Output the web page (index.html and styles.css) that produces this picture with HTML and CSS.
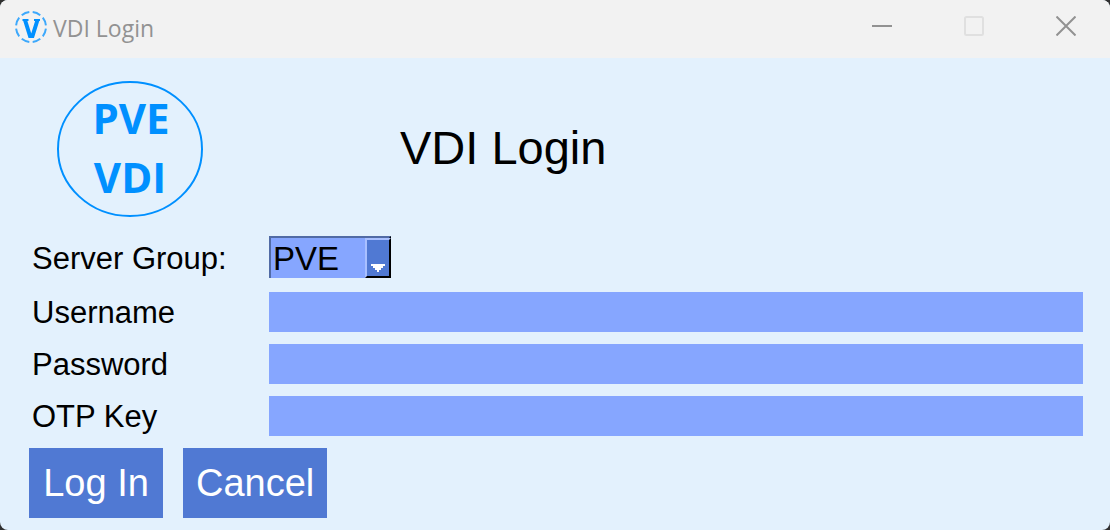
FILE: index.html
```html
<!DOCTYPE html>
<html lang="en">
<head>
<meta charset="utf-8">
<title>VDI Login</title>
<link rel="stylesheet" href="styles.css">
</head>
<body>
<div class="window">
  <header class="titlebar">
    <svg class="app-icon" viewBox="0 0 32 32" aria-hidden="true">
      <circle class="icon-ring" cx="16" cy="16" r="15" pathLength="80"/>
      <path class="icon-v" d="M10 9 15 25h2.500L22.500 9"/>
      <path class="icon-serif" d="M7.500 9h6M19 9h6"/>
    </svg>
    <span class="titlebar-text">VDI Login</span>
    <div class="controls">
      <button class="control" type="button" aria-label="Minimize">
        <svg viewBox="0 0 20 20"><path d="M0 10h20"/></svg>
      </button>
      <button class="control" type="button" aria-label="Maximize" disabled>
        <svg viewBox="0 0 20 20"><rect x="1" y="1" width="18" height="18" rx="1.5"/></svg>
      </button>
      <button class="control" type="button" aria-label="Close">
        <svg viewBox="0 0 20 20"><path d="M.5.5l19 19M19.5.5l-19 19"/></svg>
      </button>
    </div>
  </header>
  <main class="content">
    <div class="banner">
      <svg class="logo" viewBox="0 0 148 138" role="img" aria-label="PVE VDI">
        <ellipse cx="74" cy="69" rx="72" ry="67"/>
        <text x="75" y="54">PVE</text>
        <text x="74" y="113">VDI</text>
      </svg>
      <h1 class="title">VDI Login</h1>
    </div>
    <form>
      <div class="fields">
        <label for="group">Server Group:</label>
        <div class="dropdown">
          <select id="group"><option>PVE</option></select>
          <span class="arrow"><svg viewBox="0 0 14 8"><path d="M0 0h14v2h-2v2h-2v2H8v2H6V6H4V4H2V2H0z"/></svg></span>
        </div>
        <label for="username">Username</label>
        <input id="username" type="text">
        <label for="password">Password</label>
        <input id="password" type="password">
        <label for="otp">OTP Key</label>
        <input id="otp" type="text">
      </div>
      <div class="actions">
        <button class="action" type="submit">Log In</button>
        <button class="action" type="button">Cancel</button>
      </div>
    </form>
  </main>
</div>
</body>
</html>
```
FILE: styles.css
```css
* {
  box-sizing: border-box;
}

body {
  margin: 0;
  background: #303030;
  color: #000;
  font-family: "Liberation Sans", Arial, sans-serif;
}

.window {
  min-height: 100vh;
  overflow: hidden;
  border-radius: 8px;
  background: #e3f1fd;
}

.titlebar {
  display: flex;
  align-items: center;
  height: 58px;
  padding: 0 34px 4px 15px;
  background: #f2f2f2;
}

.app-icon {
  width: 32px;
  height: 32px;
  margin-right: 6px;
  fill: none;
  stroke: #0090ff;
}

.icon-ring {
  stroke-width: 2;
  stroke-dasharray: 7 3;
  stroke-dashoffset: 8.5;
  opacity: 0.75;
}

.icon-v {
  stroke-width: 4;
}

.icon-serif {
  stroke-width: 2;
}

.titlebar-text {
  padding-top: 2px;
  color: #929292;
  font: 23px "Open Sans", "Noto Sans", sans-serif;
}

.controls {
  display: flex;
  gap: 72px;
  margin-left: auto;
  padding-bottom: 2px;
}

.control {
  width: 20px;
  height: 20px;
  padding: 0;
  border: 0;
  background: none;
  color: #929292;
}

.control:disabled {
  color: #e0e0e0;
}

.control svg {
  display: block;
  width: 20px;
  height: 20px;
  fill: none;
  stroke: currentColor;
  stroke-width: 2;
}

.content {
  padding: 22px 27px 12px 29px;
}

.banner {
  display: flex;
  align-items: center;
  margin-bottom: 18px;
  padding-left: 27px;
}

.logo {
  width: 148px;
  height: 138px;
  margin-right: 196px;
}

.logo ellipse {
  fill: none;
  stroke: #0090ff;
  stroke-width: 2;
}

.logo text {
  fill: #0090ff;
  font: 700 42px "Open Sans", "Noto Sans", sans-serif;
  text-anchor: middle;
}

.title {
  margin: 0;
  padding-bottom: 4px;
  font-size: 47px;
  font-weight: 400;
}

.fields {
  display: grid;
  grid-template-columns: 237px 1fr;
  align-items: center;
  row-gap: 12px;
  padding-left: 3px;
}

.fields label {
  padding-top: 2px;
  font-size: 31px;
  line-height: 38px;
}

.fields input {
  width: 100%;
  height: 40px;
  padding: 0 4px;
  border: 0;
  border-radius: 0;
  background: #86a6ff;
  font: 31px "Liberation Sans", Arial, sans-serif;
}

.dropdown {
  position: relative;
  width: 122px;
  height: 42px;
  margin-bottom: 2px;
}

.dropdown select {
  width: 100%;
  height: 100%;
  padding: 0 0 0 2px;
  border: 2px solid #516ba5;
  border-right-color: #000;
  border-bottom: 0;
  border-radius: 0;
  appearance: none;
  background: #86a6ff;
  color: #000;
  font: 33px "Liberation Sans", Arial, sans-serif;
}

.arrow {
  position: absolute;
  top: 2px;
  right: 0;
  bottom: 0;
  display: flex;
  align-items: flex-end;
  justify-content: center;
  width: 26px;
  padding-bottom: 4px;
  border: 2px solid #a9c0ff;
  border-right-color: #000;
  border-bottom-color: #000;
  background: #5079d3;
  pointer-events: none;
}

.arrow svg {
  width: 14px;
  height: 8px;
  fill: #fff;
}

.actions {
  display: flex;
  gap: 20px;
  margin-top: 12px;
}

.action {
  min-width: 134px;
  height: 70px;
  padding: 0 13px;
  border: 0;
  background: #5079d3;
  color: #fff;
  font: 38px "Liberation Sans", Arial, sans-serif;
}
```
